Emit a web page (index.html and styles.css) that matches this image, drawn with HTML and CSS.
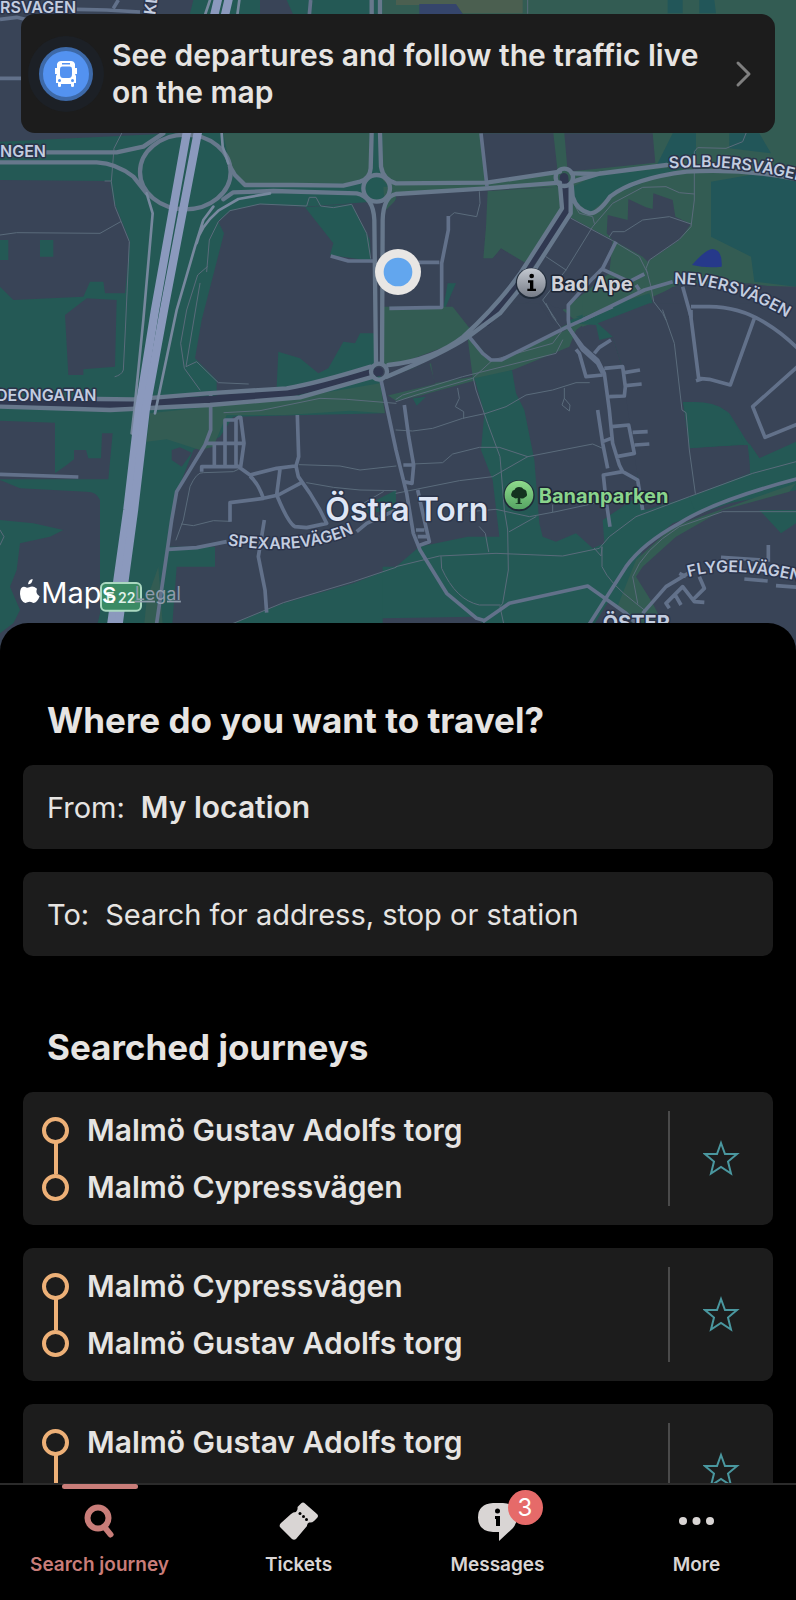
FILE: index.html
```
<!DOCTYPE html>
<html lang="en">
<head>
    <meta charset="UTF-8">
    <meta name="viewport" content="width=device-width, initial-scale=1.0">
    <title>Search journey</title>
    <link rel="stylesheet" href="styles.css">
</head>
<body>
    <main class="content">
        <section class="map">
            <svg class="map-canvas" viewBox="0 0 2388 1965" preserveAspectRatio="xMidYMin slice" role="img" aria-label="Map of Östra Torn">
                <defs>
                    <linearGradient id="poi-grey" x1="0" y1="0" x2="0" y2="1">
                        <stop offset="0" stop-color="#c3c8d0"/>
                        <stop offset="1" stop-color="#767c87"/>
                    </linearGradient>
                    <linearGradient id="poi-green" x1="0" y1="0" x2="0" y2="1">
                        <stop offset="0" stop-color="#8fdb8c"/>
                        <stop offset="1" stop-color="#56a463"/>
                    </linearGradient>
                    <path id="spexare" d="M682 1636 Q920 1672 1080 1590"/>
                    <path id="solbjer" d="M2008 506 Q2220 485 2460 560"/>
                    <path id="never" d="M2022 852 Q2190 850 2375 962"/>
                    <path id="flygel" d="M2066 1731 Q2210 1690 2460 1760"/>
                    <path id="klos" d="M466 46 L486 -120"/>
                </defs>
                <rect class="land" width="2388" height="1965"/>

                <!-- parks and green strips, west side -->
                <path class="green" d="M0 425L480 402L580 0H1188V600L915 620L780 612L690 632L655 665L672 700L605 960L585 1075L650 1140V1190L1140 1110L1150 1240L700 1250L660 1310L580 1350L530 1480L500 1640H645V1700H530L510 1965H270L300 1840V1500Q290 1475 260 1475L60 1465L0 1440V860L40 900L250 890L270 845H310L315 880H375L390 725L340 600L330 543L0 540Z"/>
                <path class="green" d="M0 720H25V780H0ZM120 720H160V770H120ZM0 1560L100 1570L190 1590L150 1610L60 1630L50 1710L30 1760L60 1830L40 1870L0 1900ZM915 622L1055 612L1110 720L1112 782L990 765L1000 730Z"/>
                <path class="green" d="M835 1055L900 1075L955 1120L985 1105L1030 1025L1065 1030L1080 1000H1125V1110L860 1165L830 1160ZM700 1870L850 1810L1060 1750L1188 1700V1965H700ZM1110 1510L1188 1470V1530L1100 1540Z"/>
                <path class="land" d="M195 945L260 895L350 900L345 1100L250 1108V1125H205ZM0 1262L165 1268V1420L200 1395L222 1378V1350H258L265 1375H303L306 1300H338L325 1438H0Z"/>
                <path class="land" d="M780 0H860L880 45H780ZM515 1350L540 1342L575 1358L545 1400L515 1380Z"/>
                <path class="park" d="M670 400H1108V530L1040 550L740 553L690 500ZM450 1240L900 1190L1140 1150L1155 1240L1050 1232L860 1245L680 1245L640 1340L600 1350L500 1318L440 1325ZM440 1800L475 1700L490 1900H430ZM1155 935H1188V1070H1155ZM1160 700L1188 590V560H1150Z"/>

                <!-- parks and blocks, north east -->
                <g transform="translate(1188 0)">
                    <path class="park" d="M-40 0H1200V870L1060 850L830 860L770 900L560 980L500 930L640 820L650 720L520 650L490 560L275 570L0 585L-40 540Z"/>
                    <path class="olive" d="M0 0H380V40H200L180 15H0Z"/>
                    <path class="teal" d="M815 0H860V40H815ZM910 0H955L960 40H910ZM830 400H900V470L780 500ZM1000 400H1090L1125 460L1000 445ZM945 545L1060 525L1200 530V860L1075 845L1065 770L945 710Z"/>
                    <path class="green" d="M530 560L600 525L880 498L760 540L640 590L580 640L535 600Z"/>
                    <path class="land" d="M255 400H472L485 515L275 545ZM505 400H770L778 488L515 515ZM20 580L275 573L280 620L270 680L262 775L290 775L315 745L390 790L440 700L500 640L520 655L650 720L600 815L520 880V930L470 920L440 890L250 960H160L165 880L175 850L150 848L140 960H-40V640Z"/>
                    <path class="land" d="M635 645L695 660L697 597L750 622L770 627L772 580L830 600L838 650L885 672L850 720L755 785L740 770L650 720L632 700Z"/>
                    <path class="park" d="M275 573L490 560L500 620L390 790L315 745L290 775H262L270 680Z"/>
                    <path class="land" d="M770 890L860 850L1200 860V1000H770Z"/>
                    <path class="green" d="M145 930L180 850H155L130 990H230ZM540 950L760 880L770 910L600 970Z"/>
                    <path class="lake" d="M888 795Q930 747 950 747Q980 750 977 800Q930 805 888 795Z"/>
                    <path class="lake-dim" d="M70 12H180L200 42H70Z"/>
                </g>

                <!-- parks and blocks, south east -->
                <g transform="translate(1188 930)">
                    <path class="park" d="M-40 -10H170L225 60L290 150L560 20V-30H660L540 60L520 110L350 180L60 260L0 272L-40 245V200L105 160L115 220L230 200L215 85L0 165H-40Z"/>
                    <path class="land" d="M225 80L330 -20H430L470 40L510 60L310 150H285Z"/>
                    <path class="land" d="M-40 205L100 160L118 222L-40 260Z"/>
                    <path class="green" d="M520 40L600 45L610 90L650 80L675 160L700 300L725 440V560L620 630L625 700L590 715L540 670L480 695L440 680L430 640L415 450L385 300L360 250L348 180L235 205L265 310L255 420L290 510L310 680H215L70 710L0 770H-40V950H640L740 900L705 800L740 720L830 640L1000 580L1200 540V440L1100 445L1050 370L990 295Q960 275 860 275L880 415L1045 405L1065 490L880 560L750 600V0H640L520 30Z"/>
                    <path class="land" d="M605 40L760 -20H860L1200 -20V420L1090 445L1050 390L1000 310Q960 275 860 275L880 415L1055 405L1065 490L880 560L740 600L725 500L675 160L650 80Z"/>
                    <path class="green" d="M862 277Q950 270 985 300Q1020 335 1045 402L882 415ZM1060 400L1090 445L1200 395V540L1060 560L900 610L880 560L1062 490Z"/>
                    <path class="green" d="M1090 600H1200V640L1155 670Z"/>
                    <path class="park" d="M660 900L720 750L830 650L1000 590L1200 520L1180 545L980 600L840 680L740 770L720 800L770 880L800 940L680 1000Z"/>
                    <path class="land" d="M-40 925L240 920L320 1000H-40ZM590 950L640 870L690 910L720 960ZM1190 930L1200 930V1000H1190Z"/>
                    <path class="green" d="M50 265L90 260L62 287Z"/>
                </g>

                <!-- footpaths -->
                <path class="path" d="M365 400L342 445L334 545L345 620L388 725L376 990L370 1110Q365 1125 345 1130M315 543H334M0 705L50 698L300 700L362 665M620 815L628 720L655 665L690 632L780 612L920 618L928 592H948L962 618L1000 623L1055 613L1100 700L1112 775M622 800L593 825L560 930L542 1030L553 1105L600 1170M600 850L558 1100L590 1085L655 1148L745 1152M672 1238L780 1232L960 1195L1040 1198L1188 1210M898 1394L1020 1398L1080 1410L1188 1398M920 1448L1000 1462L1080 1470L1188 1472M528 1620L550 1560L570 1460Q590 1415 610 1418L700 1415L715 1408M545 1572L580 1577L640 1562L690 1564M700 1870L850 1808L1060 1745L1188 1702M1090 1510L1150 1475M0 1590L12 1610L0 1635"/>
                <path class="path" transform="translate(1188 0)" d="M395 0V40M1050 400L1040 425L990 445L905 443L895 455V600L885 680L850 718L760 780L750 805L765 860L773 905L800 940L810 960M530 605L550 640L590 650L595 670M895 582L850 578L810 560L740 562L650 610L590 680L510 810L440 900L480 960M525 655L650 722L730 770L755 820M450 770L510 810M640 710L650 695H685L740 660L820 650L885 672M250 575L252 610L242 650L175 638L155 655"/>
                <path class="path" transform="translate(1188 930)" d="M0 275L60 255L230 205L290 150L470 100L500 60L470 20L450 -20M0 268L20 255L200 200L480 130L500 90M0 360L50 363L110 355L200 325L270 310L330 290L390 255L470 240L540 218H580M185 235L190 265L178 290L203 305V325M505 235V265L498 285L520 303L522 285L505 265M232 205L240 240L275 340L312 440L325 600L335 660L337 780L320 880L312 890L325 950M50 462L140 458L170 432L250 412H310L395 440L590 402L620 415M395 440L290 500L190 512L0 550M220 605L300 598L400 620L480 605L640 570M420 620L340 665M470 585V605M250 650L268 670L278 725M0 770L130 738L300 730L500 738L610 715L640 680L720 620L880 560L1070 490L1200 455M595 715L615 738L618 710V770Q640 820 720 880L745 900M800 0L835 100L858 300L870 308L880 420L898 550M135 740L137 775Q180 870 250 885H312M1200 605H980L850 650Q740 720 710 800L725 880"/>

                <!-- minor streets -->
                <g class="street">
                    <path d="M0 235H65M230 28L320 30L420 36M355 0L340 25M0 58L50 52L85 60M932 0L928 45M992 768L1045 783H1125M0 1423L235 1431M632 1180V1290L615 1335L530 1475L515 1560L470 1870M675 1390V1260H705L715 1252H722L732 1330L722 1400H605V1415M615 1330H730M643 1335V1395M675 1260V1395M708 1255V1395L750 1425L830 1405L885 1398M892 1245L896 1370L888 1398L895 1430L930 1480L960 1530L980 1570L920 1583L885 1580Q865 1570 830 1485L840 1408M750 1428Q775 1450 790 1495L690 1508V1565M790 1495L835 1485L910 1445M505 1648L590 1643L680 1625M793 1560L775 1670L795 1770L800 1838M1070 1595L1100 1570L1188 1530M1143 1140L1188 1350L1220 1480L1240 1600L1260 1650L1340 1780L1430 1855L1455 1862"/>
                    <path transform="translate(1188 0)" d="M255 400L273 560M157 648V690L137 790V922L-20 925M0 787H130M660 725L620 805L590 835L517 915V960L520 985L560 1050L605 1090L620 1120M620 808L700 845L745 822M720 855L730 870M560 960L745 870L830 845M860 860L885 950V930M885 920H940Q1030 920 1110 970Q1160 1000 1210 1050"/>
                    <path transform="translate(1188 930)" d="M25 285L38 380L53 465L48 520L22 515M22 465H50M65 540L85 630L100 695L65 708M60 660H85M65 680H92M215 75L260 130L285 150H315L515 50L650 -10M515 50L560 110L605 150L625 190L640 300L650 400L670 465L680 485L725 510L740 600M595 130L610 112L645 90M540 118L550 130L570 200L620 195M625 175L680 170L688 230L685 258L640 260M685 188L732 180M690 227L737 222M648 350L698 345L715 430L662 440M710 367L755 365M716 405L760 402M605 300L620 400L635 475M620 395L645 385M680 485L622 495L630 570L642 650M882 0L908 205L940 208L1003 225L1075 25M900 212L920 206M1210 165L1070 290L1107 382L1210 340M975 742L1100 750M1117 705V755M1045 807L1115 813M1140 827L1210 832M885 785L810 830L740 910M870 800L850 790M820 895L810 880L860 830L895 875L925 877M835 850L855 885M910 800L925 835L890 870M260 935L340 880L575 828L690 910L720 940M575 950L690 770Q740 700 850 640Q960 570 1210 505"/>
                </g>

                <!-- main roads -->
                <path class="road-bed" d="M0 1204L330 1215L640 1200L880 1175L1137 1115M1692 532L1700 630L1590 790L1460 965"/>
                <g class="road">
                    <ellipse cx="556" cy="516" rx="136" ry="112"/>
                    <path d="M140 457H350L430 440L490 400M0 487H290Q350 490 400 530L440 580M690 500L705 525L735 555H880L1030 557L1080 545Q1110 535 1112 505L1115 395V0M1140 0V395L1143 500Q1150 540 1188 550L1460 548L1680 515M670 598L700 577L820 573L1070 580Q1120 590 1123 660L1128 1090M1188 582L1460 565L1680 548M1188 582Q1150 590 1148 660L1146 1090"/>
                    <circle cx="1130" cy="565" r="40"/>
                    <circle cx="1693" cy="532" r="26"/>
                    <circle cx="1137" cy="1115" r="24"/>
                    <path d="M1715 520L1790 522L2000 495M1718 545L1800 520M1715 555L1718 590Q1730 630 1770 640Q1795 640 1830 590Q1900 535 2060 515Q2240 505 2400 540M1680 555L1686 625L1590 775Q1520 890 1390 1010Q1300 1080 1165 1095M1712 555V640L1590 830L1500 940L1405 1010Q1330 1060 1160 1130M290 1197L400 1198L620 1180L860 1165Q950 1150 1112 1100M0 1220L330 1230L630 1215L900 1192L1120 1130"/>
                </g>
                <path class="ramp" d="M630 0L615 45M718 0L712 45M440 580L458 640L430 960L402 1240L395 1300M640 620L610 660L585 740L530 930L465 1240M665 400L668 440L685 490M810 580L715 597L655 632Q600 680 590 730"/>
                <path class="highway" d="M658 -20L560 400L465 930L417 1230L382 1530L330 1900"/>
                <path class="highway" d="M690 -20L593 400L492 930L437 1230L402 1530L352 1900"/>

                <!-- street names -->
                <g class="street-name">
                    <text x="0" y="40">RSVÄGEN</text>
                    <text x="0" y="472">NGEN</text>
                    <text x="-12" y="1204">DEONGATAN</text>
                    <text><textPath href="#klos">KL</textPath></text>
                    <text><textPath href="#spexare">SPEXAREVÄGEN</textPath></text>
                    <text><textPath href="#solbjer">SOLBJERSVÄGEN</textPath></text>
                    <text><textPath href="#never">NEVERSVÄGEN</textPath></text>
                    <text><textPath href="#flygel">FLYGELVÄGEN</textPath></text>
                </g>
                <text class="district" x="976" y="1564">Östra Torn</text>
                <text class="district-small" x="1808" y="1889">ÖSTER</text>

                <!-- places -->
                <g>
                    <circle class="poi-shadow" cx="1594" cy="850" r="47"/>
                    <circle cx="1594" cy="848" r="43" fill="url(#poi-grey)"/>
                    <circle cx="1595" cy="828" r="7"/>
                    <path d="M1584 841H1600V866H1608V873H1582V866H1590V848H1584Z"/>
                    <text class="poi" x="1653" y="873">Bad Ape</text>
                </g>
                <g>
                    <circle class="poi-shadow" cx="1557" cy="1487" r="47"/>
                    <circle cx="1557" cy="1485" r="43" fill="url(#poi-green)"/>
                    <path class="tree" d="M1553 1510V1494Q1545 1497 1540 1492Q1530 1488 1535 1478Q1536 1470 1544 1469Q1547 1461 1557 1461Q1567 1461 1571 1468Q1580 1470 1580 1479Q1584 1488 1575 1492Q1569 1498 1561 1494V1510H1566V1512H1547V1510Z"/>
                    <text class="poi poi-park" x="1616" y="1509">Bananparken</text>
                </g>

                <!-- route shield -->
                <rect class="shield" x="303" y="1749" width="120" height="83" rx="14"/>
                <text class="shield-text" x="318" y="1808">E 22</text>

                <!-- current position -->
                <circle cx="1194" cy="816" r="69" fill="#e8e6e4"/>
                <circle cx="1194" cy="816" r="43" fill="#62a6ee"/>

                <!-- attribution -->
                <path fill="#fff" d="M98 1737Q86 1738 84 1753Q97 1753 98 1737ZM111 1766Q98 1755 88 1762Q80 1765 76 1761Q60 1756 60 1782Q62 1806 76 1809Q83 1806 88 1805Q93 1805 100 1809Q112 1808 119 1789Q105 1780 111 1766Z"/>
                <text class="maps" x="124" y="1808">Maps</text>
                <a href="#legal"><text class="legal" x="404" y="1799">Legal</text></a>
            </svg>

            <a class="banner" href="#live-map">
                <span class="banner-icon">
                    <svg viewBox="0 0 24 28" width="24" height="28" aria-hidden="true">
                        <path fill="#fff" fill-rule="evenodd" d="M7 1H17Q20 1 21 4V8H23V14H21L22 16V23H20V26Q20 27 18.500 27T17 26V24H7V26Q7 27 5.500 27T4 26V23H2V16L3 14H1V8H3V4Q4 1 7 1ZM8 3V4.500H16V3ZM8 6.500Q6 6.500 6 9V14Q6 18 9 18H15Q18 18 18 14V9Q18 6.500 16 6.500ZM5.500 19A1.500 1.500 0 1 0 5.500 22A1.500 1.500 0 1 0 5.500 19ZM18.500 19A1.500 1.500 0 1 0 18.500 22A1.500 1.500 0 1 0 18.500 19Z"/>
                    </svg>
                </span>
                <span class="banner-text">See departures and follow the traffic live on the map</span>
                <svg class="chevron" viewBox="0 0 18 28" width="18" height="28" aria-hidden="true"><path d="M3 3L14 14L3 25"/></svg>
            </a>
        </section>

        <div class="sheet">
            <section class="search">
                <h2>Where do you want to travel?</h2>
                <div class="field">
                    <label for="from">From:</label>
                    <input id="from" class="filled" type="text" value="My location">
                </div>
                <div class="field">
                    <label for="to">To:</label>
                    <input id="to" type="text" placeholder="Search for address, stop or station">
                </div>
            </section>

            <section class="journeys">
                <h2>Searched journeys</h2>
                <ul>
                    <li class="journey">
                        <a href="#journey-1">
                            <span class="stop">Malmö Gustav Adolfs torg</span>
                            <span class="stop">Malmö Cypressvägen</span>
                        </a>
                        <button class="favourite" aria-label="Save as favourite">
                            <svg viewBox="0 0 38 38" width="38" height="38"><path d="M18 3L22 14H34L25 21.500L28 33.500L18 27L8 33.500L11 21.500L2 14H14Z"/></svg>
                        </button>
                    </li>
                    <li class="journey">
                        <a href="#journey-2">
                            <span class="stop">Malmö Cypressvägen</span>
                            <span class="stop">Malmö Gustav Adolfs torg</span>
                        </a>
                        <button class="favourite" aria-label="Save as favourite">
                            <svg viewBox="0 0 38 38" width="38" height="38"><path d="M18 3L22 14H34L25 21.500L28 33.500L18 27L8 33.500L11 21.500L2 14H14Z"/></svg>
                        </button>
                    </li>
                    <li class="journey">
                        <a href="#journey-3">
                            <span class="stop">Malmö Gustav Adolfs torg</span>
                            <span class="stop">Malmö Cypressvägen</span>
                        </a>
                        <button class="favourite" aria-label="Save as favourite">
                            <svg viewBox="0 0 38 38" width="38" height="38"><path d="M18 3L22 14H34L25 21.500L28 33.500L18 27L8 33.500L11 21.500L2 14H14Z"/></svg>
                        </button>
                    </li>
                </ul>
            </section>
        </div>
    </main>

    <nav class="tabs">
        <a class="tab active" href="#search">
            <svg viewBox="0 0 40 40" width="40" height="40" aria-hidden="true">
                <circle cx="18" cy="17" r="10.500" fill="none" stroke="currentColor" stroke-width="6"/>
                <path d="M24.500 26L30.500 33.500" stroke="currentColor" stroke-width="6" stroke-linecap="round"/>
            </svg>
            <span>Search journey</span>
        </a>
        <a class="tab" href="#tickets">
            <svg viewBox="0 0 40 40" width="40" height="40" aria-hidden="true">
                <path fill="currentColor" d="M2 22L12 13Q14 11 17 11Q19 9 18.500 6L22 2.500Q24 0.500 26 2.500L38 13Q40 15 38 17L35 20Q33 22 30 21.500Q28 22 28 25L17 38Q15 39.500 13 38L1 26Q0 24 2 22Z"/>
                <g fill="#000"><circle cx="21" cy="12.500" r="1.500"/><circle cx="24.500" cy="15.500" r="1.500"/><circle cx="27.500" cy="18.500" r="1.500"/></g>
            </svg>
            <span>Tickets</span>
        </a>
        <a class="tab" href="#messages">
            <svg viewBox="0 0 40 40" width="40" height="40" aria-hidden="true">
                <path fill="currentColor" d="M15 2H25Q39 3 39 16Q39 22 35 27L21 40V31H15Q0 30 0 16.500T15 2Z"/>
                <circle cx="19.500" cy="10" r="2.500"/>
                <path d="M17 15H22V25H18V18H17Z"/>
            </svg>
            <b class="badge">3</b>
            <span>Messages</span>
        </a>
        <a class="tab" href="#more">
            <svg viewBox="0 0 40 40" width="40" height="40" aria-hidden="true">
                <g fill="currentColor"><circle cx="6" cy="20" r="4"/><circle cx="19.500" cy="20" r="4"/><circle cx="33" cy="20" r="4"/></g>
            </svg>
            <span>More</span>
        </a>
    </nav>
</body>
</html>
```
FILE: styles.css
```
*,
*::before,
*::after {
    margin: 0;
    padding: 0;
    box-sizing: border-box;
}

body {
    height: 100vh;
    display: flex;
    flex-direction: column;
    background: #000;
    color: #e6e4e2;
    font-family: Inter, "Liberation Sans", sans-serif;
    font-size: 30px;
}

a {
    color: inherit;
    text-decoration: none;
}

.content {
    flex: 1;
    min-height: 0;
    overflow-y: auto;
    scrollbar-width: none;
}

/* map */
.map {
    position: relative;
    height: 655px;
}

.map-canvas {
    display: block;
    width: 100%;
    height: 100%;
}

.land { fill: #394457; }
.green { fill: #245955; }
.park { fill: #335c53; }
.olive { fill: #4b5f50; }
.teal { fill: #225659; }
.lake { fill: #26398a; }
.lake-dim { fill: #35456b; }

.path, .street, .road, .road-bed, .ramp, .highway {
    fill: none;
    stroke-linecap: round;
    stroke-linejoin: round;
}

.path { stroke: #5a6b7b; stroke-width: 3; }
.street { stroke: #62718a; stroke-width: 11; stroke-linecap: butt; }
.road { stroke: #67788c; stroke-width: 13; }
.road-bed { stroke: #303850; stroke-width: 26; }
.ramp { stroke: #77889e; stroke-width: 8; }
.highway { stroke: #8b99bd; stroke-width: 25; }

.street-name text,
.district,
.district-small,
.poi {
    fill: #c3cde0;
    stroke: #2b344a;
    stroke-width: 9;
    paint-order: stroke;
    stroke-linejoin: round;
    font-size: 48px;
    font-weight: 600;
}

.district {
    fill: #dfe6f5;
    font-size: 96px;
}

.district-small {
    font-size: 60px;
    font-weight: 700;
}

.poi {
    fill: #d0d2d8;
    stroke: #1d2534;
    font-size: 60px;
    font-weight: 700;
}

.poi-park { fill: #8ad48c; }
.poi-shadow { fill: #1f2a38; }
.tree { fill: #14321f; }

.shield {
    fill: #3a8a64;
    stroke: #a9d8c0;
    stroke-width: 6;
}

.shield-text {
    fill: #dff0e8;
    font-size: 42px;
    font-weight: 600;
}

.maps {
    fill: #fff;
    font-size: 87px;
}

.legal {
    fill: #8d9bab;
    font-size: 54px;
    text-decoration: underline;
}

.banner {
    position: absolute;
    top: 14px;
    left: 21px;
    right: 21px;
    display: flex;
    align-items: center;
    gap: 8px;
    padding: 23px 22px 22px 7px;
    border-radius: 14px;
    background: #1c1c1c;
    font-weight: 600;
    line-height: 37px;
}

.banner-icon {
    flex: none;
    display: flex;
    align-items: center;
    justify-content: center;
    width: 54px;
    height: 54px;
    margin: 0 11px;
    border: 4px solid #3d69a8;
    border-radius: 50%;
    background: #5392f0;
    box-shadow: 0 0 0 11px #1c2026;
}

.banner-text {
    flex: 1;
}

.chevron {
    flex: none;
}

.chevron path {
    fill: none;
    stroke: #7f7f7f;
    stroke-width: 3;
    stroke-linecap: round;
    stroke-linejoin: round;
}

/* search */
.sheet {
    position: relative;
    margin-top: -32px;
    padding: 72px 23px 24px;
    border-radius: 28px 28px 0 0;
    background: #000;
}

h2 {
    padding: 0 24px;
    margin-bottom: 20px;
    font-size: 35px;
    font-weight: 700;
    line-height: 50px;
}

.field {
    display: flex;
    align-items: center;
    gap: 16px;
    height: 84px;
    padding: 0 24px;
    border-radius: 10px;
    background: #1c1c1c;
    font-size: 29px;
}

.field + .field {
    margin-top: 23px;
}

.field input {
    flex: 1;
    min-width: 0;
    border: none;
    outline: none;
    background: none;
    color: inherit;
    font: inherit;
}

.field input.filled {
    font-size: 30px;
    font-weight: 600;
}

.field input::placeholder {
    color: inherit;
    opacity: 1;
}

/* journeys */
.journeys {
    margin-top: 66px;
}

.journeys ul {
    display: grid;
    gap: 23px;
    list-style: none;
}

.journey {
    display: flex;
    padding: 19px 0;
    border-radius: 10px;
    background: #1c1c1c;
}

.journey a {
    flex: 1;
    display: grid;
    gap: 19px;
    padding-left: 19px;
    font-weight: 600;
    line-height: 38px;
}

.stop {
    position: relative;
    display: flex;
    align-items: center;
    gap: 18px;
}

.stop::before {
    content: "";
    width: 27px;
    height: 27px;
    border: 4px solid #edb077;
    border-radius: 50%;
}

/* line between the two stops */
.stop:first-child::after {
    content: "";
    position: absolute;
    left: 12px;
    top: 32px;
    width: 4px;
    height: 31px;
    background: #edb077;
}

.favourite {
    width: 105px;
    border: none;
    border-left: 2px solid #4a4a4a;
    background: none;
    cursor: pointer;
}

.favourite svg {
    display: block;
    margin: 0 auto;
}

.favourite path {
    fill: none;
    stroke: #4a979f;
    stroke-width: 2;
}

/* tab bar */
.tabs {
    display: grid;
    grid-template-columns: repeat(4, 1fr);
    height: 117px;
    border-top: 2px solid #2b2b2b;
    background: #000;
}

.tab {
    position: relative;
    display: flex;
    flex-direction: column;
    align-items: center;
    gap: 12px;
    padding-top: 16px;
    color: #d9d5d4;
    font-size: 19px;
    font-weight: 600;
    line-height: 24px;
}

.tab.active {
    color: #c97d79;
}

.tab.active::before {
    content: "";
    position: absolute;
    top: -1px;
    width: 76px;
    height: 5px;
    border-radius: 3px;
    background: #c97d79;
}

.badge {
    position: absolute;
    top: 5px;
    left: calc(50% + 10px);
    width: 35px;
    height: 35px;
    border-radius: 50%;
    background: #e66a69;
    color: #fff;
    font-size: 24px;
    font-weight: 400;
    line-height: 35px;
    text-align: center;
}
```
